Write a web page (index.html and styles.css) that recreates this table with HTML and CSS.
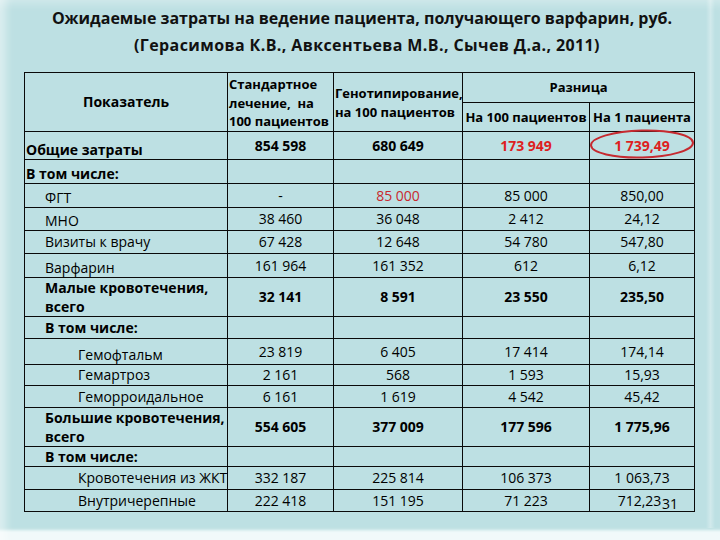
FILE: index.html
```html
<!DOCTYPE html>
<html lang="ru">
<head>
<meta charset="utf-8">
<title>Ожидаемые затраты</title>
<link rel="stylesheet" href="styles.css">
</head>
<body>
<div class="slide">
  <div class="title"><span class="t1">Ожидаемые затраты на ведение пациента, получающего варфарин, руб.</span><br><span class="t2">(Герасимова К.В., Авксентьева М.В., Сычев Д.а., 2011)</span></div>
  <table class="grid">
    <colgroup>
      <col class="c1"><col class="c2"><col class="c3"><col class="c4"><col class="c5">
    </colgroup>
    <tr class="h30">
      <th rowspan="2" class="hc big">Показатель</th>
      <th rowspan="2" class="hl top">Стандартное<br>лечение,&nbsp; на<br>100 пациентов</th>
      <th rowspan="2" class="hl mid">Генотипирование,<br>на 100 пациентов</th>
      <th colspan="2" class="hc">Разница</th>
    </tr>
    <tr class="h28">
      <th class="hc">На 100 пациентов</th>
      <th class="hc">На 1 пациента</th>
    </tr>
    <tr class="h28 b">
      <td class="lab l0 low">Общие затраты</td>
      <td class="top2">854 598</td>
      <td class="top2">680 649</td>
      <td class="top2 red">173 949</td>
      <td class="top2 red">1 739,49</td>
    </tr>
    <tr class="h24 b">
      <td class="lab l0 low">В том числе:</td><td></td><td></td><td></td><td></td>
    </tr>
    <tr class="h24">
      <td class="lab l1 low">ФГТ</td><td>-</td><td class="red2">85 000</td><td>85 000</td><td>850,00</td>
    </tr>
    <tr class="h23">
      <td class="lab l1 low">МНО</td><td>38 460</td><td>36 048</td><td>2 412</td><td>24,12</td>
    </tr>
    <tr class="h23">
      <td class="lab l1">Визиты к врачу</td><td>67 428</td><td>12 648</td><td>54 780</td><td>547,80</td>
    </tr>
    <tr class="h24">
      <td class="lab l1 low">Варфарин</td><td>161 964</td><td>161 352</td><td>612</td><td>6,12</td>
    </tr>
    <tr class="h39 b">
      <td class="lab l1">Малые кровотечения,<br>всего</td><td>32 141</td><td>8 591</td><td>23 550</td><td>235,50</td>
    </tr>
    <tr class="h22 b">
      <td class="lab l1">В том числе:</td><td></td><td></td><td></td><td></td>
    </tr>
    <tr class="h26">
      <td class="lab l2 low">Гемофтальм</td><td>23 819</td><td>6 405</td><td>17 414</td><td>174,14</td>
    </tr>
    <tr class="h21">
      <td class="lab l2">Гемартроз</td><td>2 161</td><td>568</td><td>1 593</td><td>15,93</td>
    </tr>
    <tr class="h22">
      <td class="lab l2">Геморроидальное</td><td>6 161</td><td>1 619</td><td>4 542</td><td>45,42</td>
    </tr>
    <tr class="h39 b">
      <td class="lab l1">Большие кровотечения,<br>всего</td><td>554 605</td><td>377 009</td><td>177 596</td><td>1 775,96</td>
    </tr>
    <tr class="h20 b">
      <td class="lab l1">В том числе:</td><td></td><td></td><td></td><td></td>
    </tr>
    <tr class="h23">
      <td class="lab l2">Кровотечения из ЖКТ</td><td>332 187</td><td>225 814</td><td>106 373</td><td>1 063,73</td>
    </tr>
    <tr class="h22">
      <td class="lab l2">Внутричерепные</td><td>222 418</td><td>151 195</td><td>71 223</td><td class="last">712,23</td>
    </tr>
  </table>
  <svg class="ring" width="110" height="34" viewBox="0 0 110 34">
    <ellipse cx="55" cy="16" rx="51" ry="13.5" fill="none" stroke="#c62a30" stroke-width="2" transform="rotate(-1.5 55 16)"/>
  </svg>
  <div class="pageno">31</div>
</div>
</body>
</html>
```
FILE: styles.css
```css
html, body {
  margin: 0;
  padding: 0;
}
body {
  width: 720px;
  height: 540px;
  overflow: hidden;
  font-family: "Open Sans", "Liberation Sans", sans-serif;
  color: #000;
}
.slide {
  position: relative;
  width: 720px;
  height: 540px;
  background: #bde0e3;
  box-shadow:
    inset 12px 0 8px -6px rgba(255,255,255,0.45),
    inset 0 10px 8px -6px rgba(255,255,255,0.3),
    inset 0 -13px 3px -3px rgba(246,252,252,0.9);
  overflow: hidden;
}
.slide::after {
  content: "";
  position: absolute;
  top: 0;
  bottom: 12px;
  right: 5px;
  width: 9px;
  background: linear-gradient(to right, rgba(255,255,255,0), rgba(255,255,255,0.3), rgba(255,255,255,0));
}
.title {
  padding-top: 5px;
  padding-left: 4px;
  text-align: center;
  font-weight: 700;
  font-size: 16px;
  line-height: 27px;
  color: #111;
}
.t1 { letter-spacing: 0; }
.t2 { letter-spacing: 0.4px; padding-left: 10px; }
.grid {
  margin: 13px 0 0 24px;
  border-collapse: collapse;
  table-layout: fixed;
  width: 671px;
  font-size: 14px;
}
.c1 { width: 203px; }
.c2 { width: 106px; }
.c3 { width: 129px; }
.c4 { width: 127px; }
.c5 { width: 105px; }
.grid th, .grid td {
  border: 1px solid #0a0a0a;
  padding: 0 1px;
  line-height: 19px;
  white-space: nowrap;
  overflow: visible;
}
.grid th {
  font-weight: 700;
  font-size: 13px;
  line-height: 18.5px;
}
.grid th.big { font-size: 14px; }
.hc { text-align: center; }
.hl { text-align: left; }
.hl.top { vertical-align: top; padding-top: 2px; }
.hl.mid { padding-top: 2px; }
.grid td { text-align: center; vertical-align: middle; }
.grid td.lab { text-align: left; }
.b td { font-weight: 700; }
.l0 { padding-left: 1px; }
.grid td.l1 { padding-left: 20px; }
.grid td.l2 { padding-left: 53px; }
.grid td.low { vertical-align: bottom; }
.grid td.top2 { vertical-align: top; padding-top: 4px; }
.grid td.last { padding-right: 6px; }
.red { color: #dd1f1f; }
.red2 { color: #c8282d; }
.h20 { height: 20px; }
.h21 { height: 21px; }
.h22 { height: 22px; }
.h23 { height: 23px; }
.h24 { height: 24px; }
.h26 { height: 26px; }
.h28 { height: 28px; }
.h30 { height: 30px; }
.h39 { height: 39px; }
.ring {
  position: absolute;
  left: 587px;
  top: 128px;
}
.pageno {
  position: absolute;
  left: 662px;
  top: 496px;
  font-size: 14px;
  line-height: 16px;
}
```
